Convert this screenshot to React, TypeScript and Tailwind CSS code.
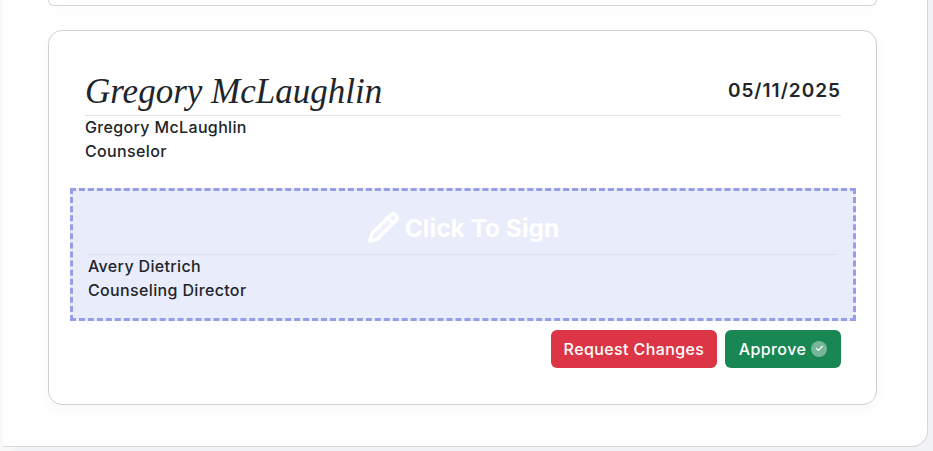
import { Pencil, Check } from 'lucide-react';

const sans = 'font-["Inter","Liberation_Sans",sans-serif]';

const Signer: React.FC<{ name: string; role: string }> = ({ name, role }) => (
  <div className="-mt-px text-[16px] leading-6 font-[450] tracking-[0.35px] text-[#212529]">
    <p>{name}</p>
    <p>{role}</p>
  </div>
);

export default function App() {
  return (
    <div className={`h-[451px] w-[933px] overflow-hidden bg-gradient-to-r from-[#f8f8f8] from-[1%] to-[#f1f2f5] to-[2%] ${sans}`}>
      <div className="ml-[3px] h-[447px] w-[925px] rounded-br-[16px] border-b border-r border-[#d6d7da] bg-white pl-[45px] pr-[50px]">
        {/* previous card, only its bottom edge is in view */}
        <div className="h-[6px] rounded-b-[14px] border-x border-b border-[#d4d5d8] bg-white shadow-[0_6px_16px_rgba(0,0,0,0.03)]" />

        <div className="mt-[24px] h-[375px] rounded-[14px] border border-[#cfd0d3] bg-white pt-[36px] pr-[20px] pl-[21px] shadow-[0_6px_16px_rgba(0,0,0,0.03)]">
          <div className="mx-[15px]">
            <div className="flex h-[49px] items-end justify-between border-b border-[#e3e4e6]">
              <span className="font-['Liberation_Serif',serif] text-[35px] leading-[46px] text-[#212529] italic">
                Gregory McLaughlin
              </span>
              <span className="pb-[12px] text-[19px] leading-6 font-semibold tracking-[1px] text-[#212529]">
                05/11/2025
              </span>
            </div>
            <Signer name="Gregory McLaughlin" role="Counselor" />
          </div>

          <div className="mt-[25px] flex h-[133px] flex-col border-3 border-dashed border-[#959ee6] bg-[#e9ecfb] px-[15px]">
            <div className="flex h-[64px] items-end justify-center gap-[5px] border-b border-[#dfe1f0] pb-[9px]">
              <Pencil className="mb-[1px] h-[33px] w-[33px] text-white" strokeWidth={2.4} fill="white" fillOpacity={0.3} />
              <span className="text-[24.5px] leading-[34px] font-bold text-white">Click To Sign</span>
            </div>
            <Signer name="Avery Dietrich" role="Counseling Director" />
          </div>

          <div className="mt-[9px] mr-[15px] flex justify-end gap-2">
            <button className="h-[38px] w-[166px] rounded-md bg-[#dc3545] pb-px text-[16px] font-[450] tracking-[0.4px] text-white">
              Request Changes
            </button>
            <button className="flex h-[38px] w-[116px] items-center justify-center gap-[5px] rounded-md bg-[#198754] pb-px text-[16px] font-[450] tracking-[0.4px] text-white">
              Approve
              <span className="flex h-4 w-4 items-center justify-center rounded-full bg-[#75b798]">
                <Check className="h-[9px] w-[9px] text-white" strokeWidth={3} />
              </span>
            </button>
          </div>
        </div>
      </div>
    </div>
  );
}
